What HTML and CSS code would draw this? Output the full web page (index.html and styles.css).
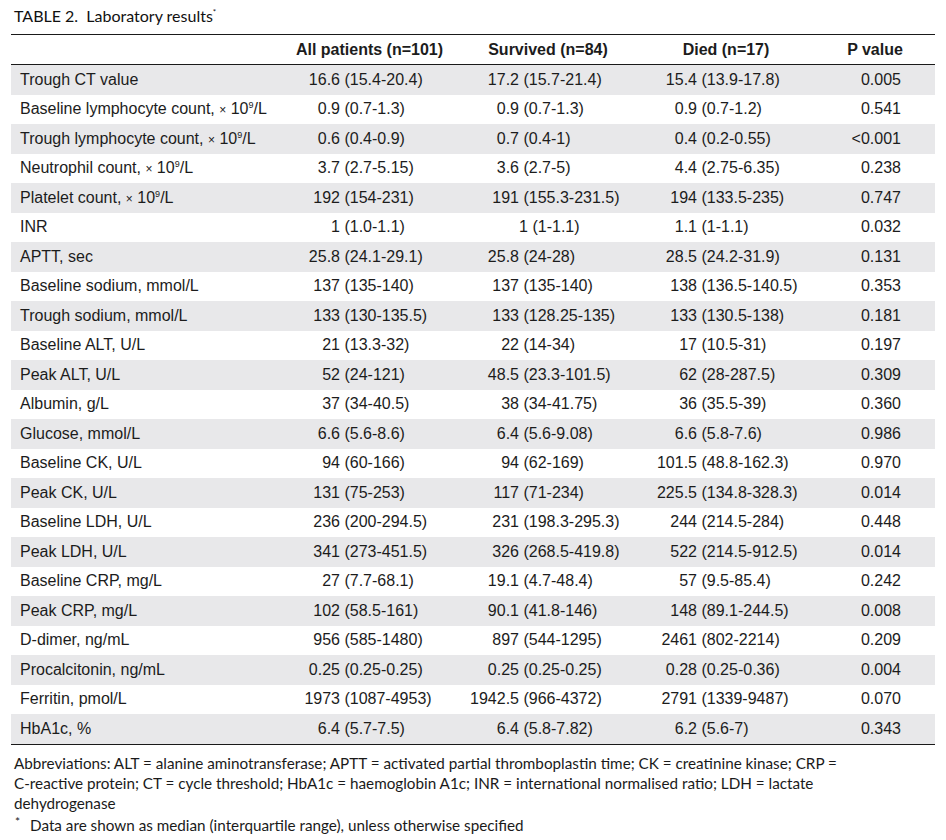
FILE: index.html
```html
<!DOCTYPE html>
<html>
<head>
<meta charset="utf-8">
<link rel="stylesheet" href="styles.css">
</head>
<body>
<div class="caption">TABLE 2.&nbsp; Laboratory results<sup>*</sup></div>
<div class="table">
  <div class="row head">
    <div></div>
    <div>All patients (n=101)</div>
    <div>Survived (n=84)</div>
    <div>Died (n=17)</div>
    <div>P value</div>
  </div>
  <div class="row"><div class="lbl">Trough CT value</div><div><span class="m">16.6</span> (15.4-20.4)</div><div><span class="m">17.2</span> (15.7-21.4)</div><div><span class="m">15.4</span> (13.9-17.8)</div><div class="p">0.005</div></div>
  <div class="row"><div class="lbl">Baseline lymphocyte count, <span class="x">×</span> 10<sup>9</sup>/L</div><div><span class="m">0.9</span> (0.7-1.3)</div><div><span class="m">0.9</span> (0.7-1.3)</div><div><span class="m">0.9</span> (0.7-1.2)</div><div class="p">0.541</div></div>
  <div class="row"><div class="lbl">Trough lymphocyte count, <span class="x">×</span> 10<sup>9</sup>/L</div><div><span class="m">0.6</span> (0.4-0.9)</div><div><span class="m">0.7</span> (0.4-1)</div><div><span class="m">0.4</span> (0.2-0.55)</div><div class="p">&lt;0.001</div></div>
  <div class="row"><div class="lbl">Neutrophil count, <span class="x">×</span> 10<sup>9</sup>/L</div><div><span class="m">3.7</span> (2.7-5.15)</div><div><span class="m">3.6</span> (2.7-5)</div><div><span class="m">4.4</span> (2.75-6.35)</div><div class="p">0.238</div></div>
  <div class="row"><div class="lbl">Platelet count, <span class="x">×</span> 10<sup>9</sup>/L</div><div><span class="m">192</span> (154-231)</div><div><span class="m">191</span> (155.3-231.5)</div><div><span class="m">194</span> (133.5-235)</div><div class="p">0.747</div></div>
  <div class="row"><div class="lbl">INR</div><div><span class="m">1</span> (1.0-1.1)</div><div><span class="m shift">1</span> (1-1.1)</div><div><span class="m">1.1</span> (1-1.1)</div><div class="p">0.032</div></div>
  <div class="row"><div class="lbl">APTT, sec</div><div><span class="m">25.8</span> (24.1-29.1)</div><div><span class="m">25.8</span> (24-28)</div><div><span class="m">28.5</span> (24.2-31.9)</div><div class="p">0.131</div></div>
  <div class="row"><div class="lbl">Baseline sodium, mmol/L</div><div><span class="m">137</span> (135-140)</div><div><span class="m">137</span> (135-140)</div><div><span class="m">138</span> (136.5-140.5)</div><div class="p">0.353</div></div>
  <div class="row"><div class="lbl">Trough sodium, mmol/L</div><div><span class="m">133</span> (130-135.5)</div><div><span class="m">133</span> (128.25-135)</div><div><span class="m">133</span> (130.5-138)</div><div class="p">0.181</div></div>
  <div class="row"><div class="lbl">Baseline ALT, U/L</div><div><span class="m">21</span> (13.3-32)</div><div><span class="m">22</span> (14-34)</div><div><span class="m">17</span> (10.5-31)</div><div class="p">0.197</div></div>
  <div class="row"><div class="lbl">Peak ALT, U/L</div><div><span class="m">52</span> (24-121)</div><div><span class="m">48.5</span> (23.3-101.5)</div><div><span class="m">62</span> (28-287.5)</div><div class="p">0.309</div></div>
  <div class="row"><div class="lbl">Albumin, g/L</div><div><span class="m">37</span> (34-40.5)</div><div><span class="m">38</span> (34-41.75)</div><div><span class="m">36</span> (35.5-39)</div><div class="p">0.360</div></div>
  <div class="row"><div class="lbl">Glucose, mmol/L</div><div><span class="m">6.6</span> (5.6-8.6)</div><div><span class="m">6.4</span> (5.6-9.08)</div><div><span class="m">6.6</span> (5.8-7.6)</div><div class="p">0.986</div></div>
  <div class="row"><div class="lbl">Baseline CK, U/L</div><div><span class="m">94</span> (60-166)</div><div><span class="m">94</span> (62-169)</div><div><span class="m">101.5</span> (48.8-162.3)</div><div class="p">0.970</div></div>
  <div class="row"><div class="lbl">Peak CK, U/L</div><div><span class="m">131</span> (75-253)</div><div><span class="m">117</span> (71-234)</div><div><span class="m">225.5</span> (134.8-328.3)</div><div class="p">0.014</div></div>
  <div class="row"><div class="lbl">Baseline LDH, U/L</div><div><span class="m">236</span> (200-294.5)</div><div><span class="m">231</span> (198.3-295.3)</div><div><span class="m">244</span> (214.5-284)</div><div class="p">0.448</div></div>
  <div class="row"><div class="lbl">Peak LDH, U/L</div><div><span class="m">341</span> (273-451.5)</div><div><span class="m">326</span> (268.5-419.8)</div><div><span class="m">522</span> (214.5-912.5)</div><div class="p">0.014</div></div>
  <div class="row"><div class="lbl">Baseline CRP, mg/L</div><div><span class="m">27</span> (7.7-68.1)</div><div><span class="m">19.1</span> (4.7-48.4)</div><div><span class="m">57</span> (9.5-85.4)</div><div class="p">0.242</div></div>
  <div class="row"><div class="lbl">Peak CRP, mg/L</div><div><span class="m">102</span> (58.5-161)</div><div><span class="m">90.1</span> (41.8-146)</div><div><span class="m">148</span> (89.1-244.5)</div><div class="p">0.008</div></div>
  <div class="row"><div class="lbl">D-dimer, ng/mL</div><div><span class="m">956</span> (585-1480)</div><div><span class="m">897</span> (544-1295)</div><div><span class="m">2461</span> (802-2214)</div><div class="p">0.209</div></div>
  <div class="row"><div class="lbl">Procalcitonin, ng/mL</div><div><span class="m">0.25</span> (0.25-0.25)</div><div><span class="m">0.25</span> (0.25-0.25)</div><div><span class="m">0.28</span> (0.25-0.36)</div><div class="p">0.004</div></div>
  <div class="row"><div class="lbl">Ferritin, pmol/L</div><div><span class="m">1973</span> (1087-4953)</div><div><span class="m">1942.5</span> (966-4372)</div><div><span class="m">2791</span> (1339-9487)</div><div class="p">0.070</div></div>
  <div class="row"><div class="lbl">HbA1c, %</div><div><span class="m">6.4</span> (5.7-7.5)</div><div><span class="m">6.4</span> (5.8-7.82)</div><div><span class="m">6.2</span> (5.6-7)</div><div class="p">0.343</div></div>
</div>
<div class="notes">
  <p>Abbreviations: ALT = alanine aminotransferase; APTT = activated partial thromboplastin time; CK = creatinine kinase; CRP =<br>C-reactive protein; CT = cycle threshold; HbA1c = haemoglobin A1c; INR = international normalised ratio; LDH = lactate<br>dehydrogenase</p>
  <p class="star"><span class="ast">*</span>Data are shown as median (interquartile range), unless otherwise specified</p>
</div>
</body>
</html>
```

FILE: styles.css
```css
html, body {
  margin: 0;
  padding: 0;
  background: #ffffff;
}

body {
  color: #1c1c1c;
  font-family: "Liberation Sans", Arial, sans-serif;
}

.caption {
  font-family: Lato, "Open Sans", sans-serif;
  font-size: 16px;
  line-height: 18px;
  padding: 7px 0 0 14px;
  height: 20px;
  color: #111;
}

.caption sup {
  font-size: 8px;
  vertical-align: 7px;
  line-height: 0;
}

.table {
  margin: 7px 0 0 11px;
  width: 924px;
  border-top: 1px solid #1a1a1a;
  border-bottom: 1px solid #1a1a1a;
  font-size: 16px;
}

.row {
  display: grid;
  grid-template-columns: 269px 179px 178px 178px 120px;
  height: 29.5px;
  align-items: center;
  white-space: nowrap;
}

.row:nth-child(even) {
  background: #e8e8ea;
}

.row.head {
  height: 29px;
  border-bottom: 1px solid #1a1a1a;
  font-weight: bold;
  text-align: center;
  background: #ffffff;
}

.lbl {
  padding-left: 9px;
}

.m {
  display: inline-block;
  width: 60px;
  text-align: right;
}

.m.shift {
  width: 69px;
}

.p {
  text-align: right;
  padding-right: 34px;
}

.x {
  font-size: 12px;
}

.lbl sup {
  font-size: 9px;
  line-height: 0;
  vertical-align: 6px;
}

.notes {
  font-family: Lato, "Open Sans", sans-serif;
  font-size: 15.25px;
  line-height: 20px;
  color: #1a1a1a;
  padding: 8px 0 0 14px;
}

.notes p {
  margin: 0;
}

.notes .star {
  margin-top: 2px;
  position: relative;
  padding-left: 16px;
}

.ast {
  position: absolute;
  left: 1px;
  top: -3px;
  font-size: 12px;
}
```
